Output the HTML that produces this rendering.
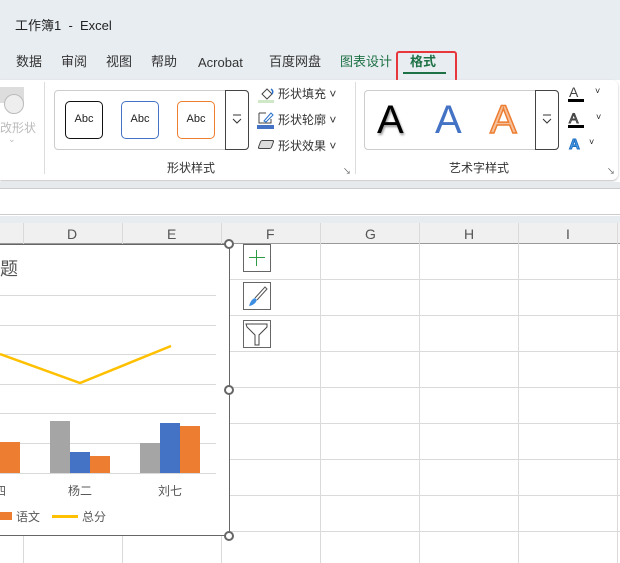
<!DOCTYPE html>
<html><head><meta charset="utf-8"><style>
*{margin:0;padding:0;box-sizing:border-box}
body{width:620px;height:556px;overflow:hidden;background:#fff;font-family:"Liberation Sans","Noto Sans CJK SC",sans-serif;position:relative;color:#222}
.a{position:absolute;white-space:nowrap}
.tab{position:absolute;top:53px;font-size:13px;color:#333;line-height:18px;height:18px}
.box{position:absolute;top:101px;width:38px;height:38px;border-radius:5px;font-size:11px;text-align:center;line-height:35px;color:#222}
.sm{font-size:12px;color:#333;line-height:16px}
.cl{position:absolute;top:216px;height:340px;width:1px;background:#dadada}
.rl{position:absolute;left:0;width:620px;height:1px;background:#dadada}
.gl{position:absolute;left:0;width:216px;height:1px;background:#d9d9d9}
.h{position:absolute;width:10px;height:10px;border:2px solid #666;border-radius:50%;background:#fff}
.cap{position:absolute;font-size:14px;color:#555;top:226px}
.dd{position:absolute;top:90px;width:24px;height:60px;border:1px solid #444;border-radius:0 4px 4px 0}
</style></head><body>
<div class="a" style="left:0;top:0;width:620px;height:80px;background:#e8edf1"></div>
<div class="a" style="left:15px;top:15px;font-size:13px;color:#222">工作簿1 &nbsp;- &nbsp;Excel</div>
<div class="tab" style="left:16px">数据</div>
<div class="tab" style="left:61px">审阅</div>
<div class="tab" style="left:106px">视图</div>
<div class="tab" style="left:151px">帮助</div>
<div class="tab" style="left:198px;top:54px">Acrobat</div>
<div class="tab" style="left:269px">百度网盘</div>
<div class="tab" style="left:340px;color:#1e7145">图表设计</div>
<div class="tab" style="left:410px;color:#1e7145;font-weight:bold">格式</div>
<div class="a" style="left:403px;top:72px;width:43px;height:2px;background:#1e7145"></div>
<div class="a" style="left:396px;top:51px;width:61px;height:33px;border:2px solid #e8373c;border-radius:3px"></div>
<!-- ribbon -->
<div class="a" style="left:0;top:80px;width:618px;height:100px;background:#fff;border-radius:0 6px 6px 0;box-shadow:0 1px 2px #bbb"></div>
<div class="a" style="left:0;top:87px;width:24px;height:16px;background:#ddd"></div>
<div class="a" style="left:4px;top:94px;width:20px;height:20px;border-radius:50%;border:1px solid #bbb;background:#eee"></div>
<div class="a" style="left:0;top:119px;font-size:12px;color:#bbb">改形状</div>
<div class="a" style="left:8px;top:134px;font-size:9px;color:#bbb">⌄</div>
<div class="a" style="left:44px;top:82px;width:1px;height:92px;background:#ddd"></div>
<div class="a" style="left:54px;top:90px;width:195px;height:60px;border:1px solid #ccc;border-radius:4px"></div>
<div class="dd" style="left:225px"><svg width="22" height="58"><path d="M7 24H15M7 28L11 32L15 28" fill="none" stroke="#333"/></svg></div>
<div class="box" style="left:65px;border:1.5px solid #111">Abc</div>
<div class="box" style="left:121px;border:1.5px solid #4472c4">Abc</div>
<div class="box" style="left:177px;border:1.5px solid #ed7d31">Abc</div>
<svg class="a" style="left:258px;top:85px" width="18" height="18"><path d="M4 9 L9 4 L14 9 L9 14Z" fill="#fff" stroke="#444"/><path d="M13 4 Q16 6 14 9" fill="none" stroke="#2a70c8" stroke-width="1.5"/><rect x="0" y="15" width="16" height="3" fill="#cfe8c8"/></svg>
<div class="a sm" style="left:278px;top:86px">形状填充 ˅</div>
<svg class="a" style="left:257px;top:111px" width="18" height="18"><path d="M2 2H9M2 2V12H14V8" fill="none" stroke="#444"/><path d="M7 10L14 2L16 4L9 11Z" fill="#fff" stroke="#2a70c8"/><rect x="0" y="14" width="17" height="4" fill="#4472c4"/></svg>
<div class="a sm" style="left:278px;top:112px">形状轮廓 ˅</div>
<div class="a" style="left:259px;top:140px;width:14px;height:9px;border:1.5px solid #444;border-radius:2px;transform:skewX(-20deg);background:#ddd"></div>
<div class="a sm" style="left:278px;top:138px">形状效果 ˅</div>
<div class="a sm" style="left:167px;top:160px">形状样式</div>
<div class="a" style="left:343px;top:166px;font-size:8px;color:#555">↘</div>
<div class="a" style="left:355px;top:82px;width:1px;height:92px;background:#ddd"></div>
<div class="a" style="left:364px;top:90px;width:195px;height:60px;border:1px solid #ccc;border-radius:4px"></div>
<div class="dd" style="left:535px"><svg width="22" height="58"><path d="M7 24H15M7 28L11 32L15 28" fill="none" stroke="#333"/></svg></div>
<div class="a" style="left:377px;top:98px;font-size:40px;line-height:44px;color:#000;text-shadow:1px 2px 2px #999">A</div>
<div class="a" style="left:435px;top:98px;font-size:40px;line-height:44px;color:#4472c4">A</div>
<div class="a" style="left:490px;top:98px;font-size:40px;line-height:44px;color:#f5c09a;-webkit-text-stroke:1.5px #ed7d31">A</div>
<div class="a" style="left:569px;top:84px;font-size:14px;color:#444">A</div>
<div class="a" style="left:568px;top:99px;width:16px;height:3px;background:#000"></div>
<div class="a" style="left:569px;top:110px;font-size:14px;color:#fff;-webkit-text-stroke:1px #444">A</div>
<div class="a" style="left:568px;top:125px;width:16px;height:3px;background:#000"></div>
<div class="a" style="left:569px;top:136px;font-size:15px;color:#4fa0e8;-webkit-text-stroke:1px #1f6fc0;font-weight:bold">A</div>
<div class="a" style="left:595px;top:86px;font-size:9px">˅</div>
<div class="a" style="left:596px;top:112px;font-size:9px">˅</div>
<div class="a" style="left:589px;top:137px;font-size:9px">˅</div>
<div class="a sm" style="left:449px;top:160px">艺术字样式</div>
<div class="a" style="left:607px;top:166px;font-size:8px;color:#555">↘</div>
<!-- formula bar -->
<div class="a" style="left:0;top:182px;width:620px;height:6px;background:#e6eaed"></div>
<div class="a" style="left:0;top:188px;width:620px;height:27px;background:#fff;border-top:1px solid #ccc;border-bottom:1px solid #ccc"></div>
<div class="a" style="left:0;top:216px;width:620px;height:7px;background:#e6ecef"></div>
<div class="a" style="left:0;top:223px;width:620px;height:21px;background:#f0f0f0;border-bottom:1px solid #999"></div>
<div class="cl" style="left:23px;top:223px"></div><div class="cl" style="left:122px;top:223px"></div><div class="cl" style="left:221px;top:223px"></div><div class="cl" style="left:320px;top:223px"></div><div class="cl" style="left:419px;top:223px"></div><div class="cl" style="left:518px;top:223px"></div><div class="cl" style="left:617px;top:223px"></div>
<div class="cap" style="left:67px">D</div><div class="cap" style="left:167px">E</div><div class="cap" style="left:266px">F</div><div class="cap" style="left:365px">G</div><div class="cap" style="left:464px">H</div><div class="cap" style="left:566px">I</div>
<div class="rl" style="top:279px"></div><div class="rl" style="top:315px"></div><div class="rl" style="top:351px"></div><div class="rl" style="top:387px"></div><div class="rl" style="top:423px"></div><div class="rl" style="top:459px"></div><div class="rl" style="top:495px"></div><div class="rl" style="top:531px"></div>
<!-- chart -->
<div class="a" style="left:0;top:244px;width:230px;height:292px;background:#fff;border:1.5px solid #666;border-left:none"></div>
<div class="a" style="left:0;top:255px;font-size:18px;color:#555">题</div>
<div class="gl" style="top:295px"></div><div class="gl" style="top:325px"></div><div class="gl" style="top:354px"></div><div class="gl" style="top:384px"></div><div class="gl" style="top:413px"></div><div class="gl" style="top:443px"></div><div class="gl" style="top:473px"></div>
<div class="a" style="left:0;top:442px;width:20px;height:31px;background:#ed7d31"></div>
<div class="a" style="left:50px;top:421px;width:20px;height:52px;background:#a5a5a5"></div>
<div class="a" style="left:70px;top:452px;width:20px;height:21px;background:#4472c4"></div>
<div class="a" style="left:90px;top:456px;width:20px;height:17px;background:#ed7d31"></div>
<div class="a" style="left:140px;top:443px;width:20px;height:30px;background:#a5a5a5"></div>
<div class="a" style="left:160px;top:423px;width:20px;height:50px;background:#4472c4"></div>
<div class="a" style="left:180px;top:426px;width:20px;height:47px;background:#ed7d31"></div>
<svg class="a" style="left:0;top:0" width="230" height="556"><polyline points="0,354 80,383 171,346" fill="none" stroke="#ffc000" stroke-width="2.5"/></svg>
<div class="a" style="left:-6px;top:482px;font-size:12px;color:#595959">四</div>
<div class="a" style="left:68px;top:482px;font-size:12px;color:#595959">杨二</div>
<div class="a" style="left:158px;top:482px;font-size:12px;color:#595959">刘七</div>
<div class="a" style="left:0;top:512px;width:12px;height:8px;background:#ed7d31"></div>
<div class="a" style="left:16px;top:508px;font-size:12px;color:#595959">语文</div>
<div class="a" style="left:52px;top:515px;width:26px;height:2.5px;background:#ffc000"></div>
<div class="a" style="left:82px;top:508px;font-size:12px;color:#595959">总分</div>
<div class="h" style="left:224px;top:239px"></div><div class="h" style="left:224px;top:385px"></div><div class="h" style="left:224px;top:531px"></div>
<!-- side buttons -->
<div class="a" style="left:243px;top:244px;width:28px;height:28px;border:1px solid #666;background:#fff"></div>
<div class="a" style="left:249px;top:257px;width:16px;height:1px;background:#2e9a44"></div>
<div class="a" style="left:256px;top:250px;width:1px;height:16px;background:#2e9a44"></div>
<div class="a" style="left:243px;top:282px;width:28px;height:28px;border:1px solid #666;background:#fff"></div>
<svg class="a" style="left:243px;top:282px" width="28" height="28"><path d="M12 16 L22 5 L24 7 L14 18" fill="#fff" stroke="#555"/><path d="M6 24 Q8 17 12 16 L14 18 Q12 23 6 24Z" fill="#3d8de0"/></svg>
<div class="a" style="left:243px;top:320px;width:28px;height:28px;border:1px solid #666;background:#fff"></div>
<svg class="a" style="left:243px;top:320px" width="28" height="28"><path d="M3 4 H24 V7 L16 15 V25 H12 V15 L4 7Z" fill="#fff" stroke="#444"/></svg>
</body></html>
